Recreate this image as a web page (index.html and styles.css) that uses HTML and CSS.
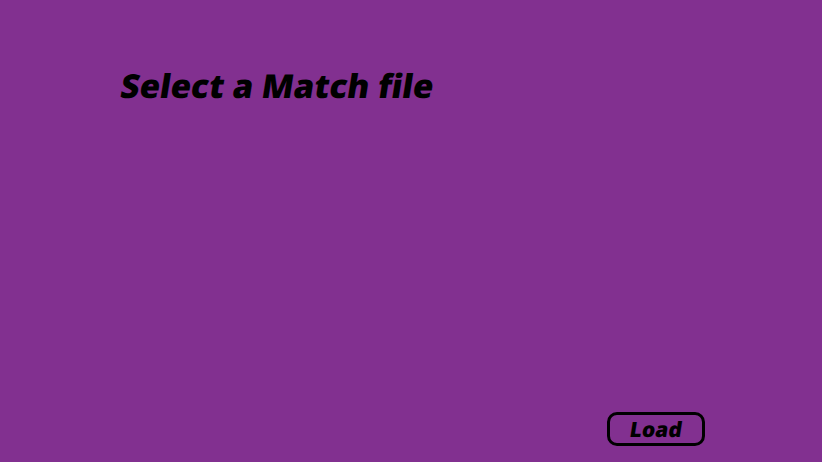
FILE: index.html
```html
<!DOCTYPE html>
<html>
<head>
<meta charset="utf-8">
<link rel="stylesheet" href="styles.css">
</head>
<body>
<div class="screen">
  <h1 class="title"><span class="slant">Select a Match file</span></h1>
  <div class="spacer"></div>
  <div class="actions">
    <button class="load"><span class="slant">Load</span></button>
  </div>
</div>
</body>
</html>
```
FILE: styles.css
```css
html, body {
  margin: 0;
  padding: 0;
  background: #823090;
}
.screen {
  width: 822px;
  height: 462px;
  display: flex;
  flex-direction: column;
  box-sizing: border-box;
  padding: 63px 0 16px 121px;
  font-family: "Open Sans", sans-serif;
}
.slant {
  display: inline-block;
  transform: skewX(-9deg);
}
.title {
  margin: 0;
  font-size: 33px;
  font-weight: 800;
  color: #000;
  line-height: 46px;
  letter-spacing: 0;
}
.spacer { flex: 1; }
.actions {
  display: flex;
  padding-left: 486px;
}
.load {
  width: 98px;
  height: 34px;
  box-sizing: border-box;
  border: 3px solid #000;
  border-radius: 10px;
  background: transparent;
  font-family: "Open Sans", sans-serif;
  font-size: 21px;
  font-weight: 800;
  color: #000;
  padding: 0;
  line-height: 26px;
}
```
